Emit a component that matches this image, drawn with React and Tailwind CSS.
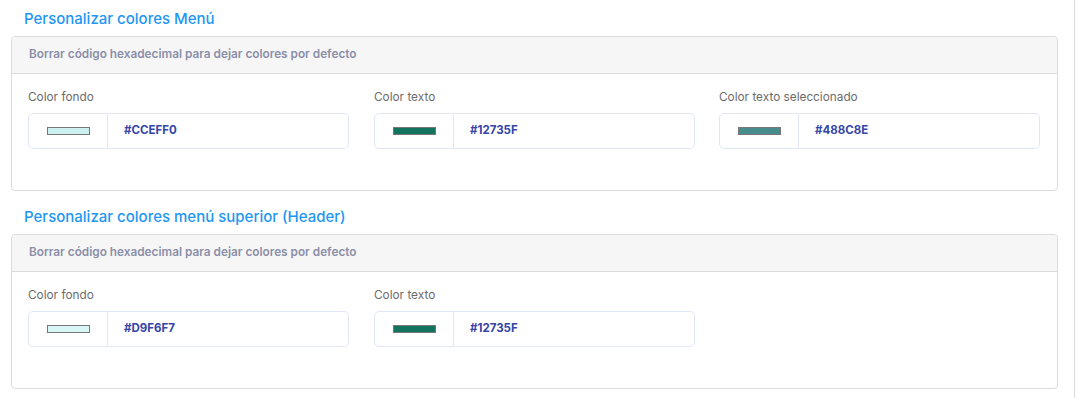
import React from 'react';

const sections = [
  {
    title: 'Personalizar colores Menú',
    fields: [
      { label: 'Color fondo', hex: '#CCEFF0' },
      { label: 'Color texto', hex: '#12735F' },
      { label: 'Color texto seleccionado', hex: '#488C8E' },
    ],
  },
  {
    title: 'Personalizar colores menú superior (Header)',
    fields: [
      { label: 'Color fondo', hex: '#D9F6F7' },
      { label: 'Color texto', hex: '#12735F' },
    ],
  },
];

const ColorField = ({ label, hex }) => (
  <div className="w-[321px] shrink-0">
    <div className="text-[11.8px] text-[#6b6b6b] leading-none mb-[9px] h-[12px]">{label}</div>
    <div className="flex h-[36px]">
      <div className="w-[80px] shrink-0 flex items-center justify-center border border-[#e3e6f7] rounded-l-[5px]">
        <div className="w-[43px] h-[8px] border border-[#777]" style={{ backgroundColor: hex }} />
      </div>
      <div className="flex-1 flex items-center pl-[16px] border border-l-0 border-[#e3e6f7] rounded-r-[5px] text-[11.5px] font-bold text-[#3545a8]">
        {hex}
      </div>
    </div>
  </div>
);

export default function App() {
  return (
    <div
      className="w-[1075px] h-[398px] bg-white border-r border-[#dcdcdc] pl-[11px] pr-[16px] overflow-hidden"
      style={{ fontFamily: 'Inter, "Open Sans", sans-serif' }}
    >
      {sections.map((s, i) => (
        <div key={i} className={i === 0 ? 'pt-[10px]' : 'pt-[17px]'}>
          <h2 className="pl-[13px] text-[15px] font-medium text-[#2196f3] leading-[18px] mb-[8px]">{s.title}</h2>
          <div className="border border-[#dcdcdc] rounded-[4px] h-[155px]">
            <div className="h-[37px] bg-[#f6f6f6] border-b border-[#dcdcdc] flex items-center pl-[17px] text-[11.8px] font-semibold text-[#8b8fa8] rounded-t-[4px]">
              Borrar código hexadecimal para dejar colores por defecto
            </div>
            <div className="pl-[16px] pt-[18px] flex">
              {s.fields.map((f, j) => (
                <div key={j} className={j === 0 ? '' : j === 1 ? 'ml-[25px]' : 'ml-[24px]'}>
                  <ColorField {...f} />
                </div>
              ))}
            </div>
          </div>
        </div>
      ))}
    </div>
  );
}
